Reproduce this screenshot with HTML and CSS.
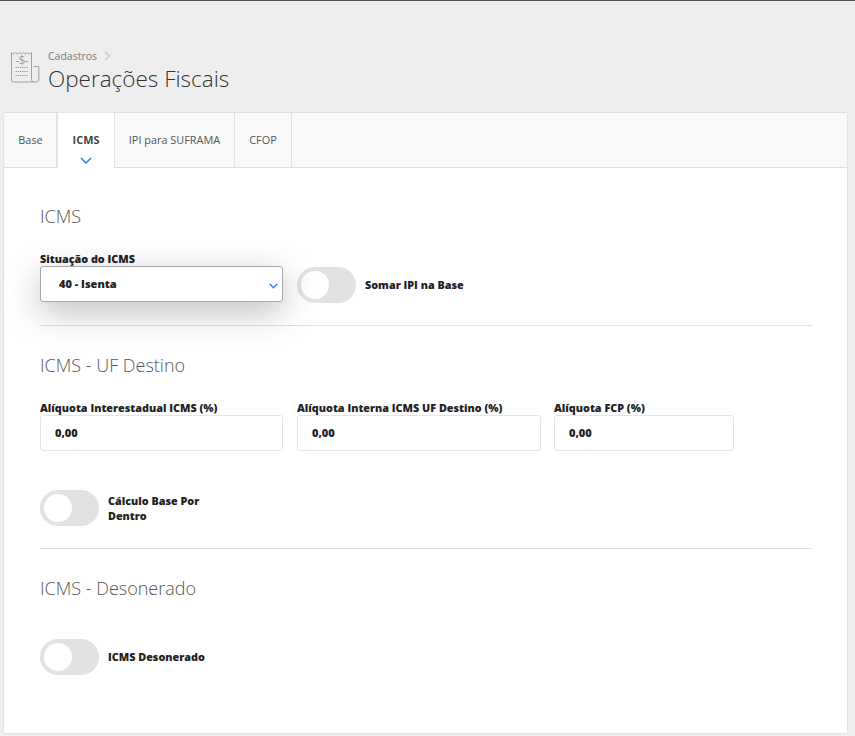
FILE: index.html
```html
<!DOCTYPE html>
<html lang="pt-BR">
<head>
<meta charset="utf-8">
<title>Operações Fiscais</title>
<link rel="stylesheet" href="styles.css">
</head>
<body>
<header class="page-header">
  <svg class="page-icon" width="30" height="33" viewBox="0 0 30 33" fill="none" stroke="#a5a0a0" stroke-width="1">
    <path d="M1.500 1.500l2 1.500 2-1.500 2 1.500 2-1.500 2 1.500 2-1.500 2 1.500 2-1.500 2 1.500 2-1.500V28.500a2.500 2.500 0 0 0 2.500 2.500"/>
    <path d="M1.500 1.500V29a2 2 0 0 0 2 2H26a2.800 2.800 0 0 0 2.800-2.800V15.500H23.500"/>
    <path d="M6 10.500h3M15 10.500h3"/>
    <path d="M5.500 16.500h13M5.500 20.500h13M5.500 24.500h13" stroke-dasharray="1.500 .7"/>
    <text class="icon-dollar" x="12" y="14">$</text>
  </svg>
  <div class="titles">
    <div class="crumb">Cadastros
      <svg class="crumb-arrow" width="7" height="10" viewBox="0 0 7 10" fill="none" stroke="#c4c4c4" stroke-width="1.2"><path d="M1 1l4.500 4L1 9"/></svg>
    </div>
    <h1>Operações Fiscais</h1>
  </div>
</header>
<main class="card">
  <nav class="tabs">
    <div class="tab tab-base">Base</div>
    <div class="tab tab-active">ICMS
      <svg class="tab-chevron" width="12" height="7" viewBox="0 0 12 7" fill="none" stroke="#2e86f0" stroke-width="1.6"><path d="M1 1l5 5 5-5"/></svg>
    </div>
    <div class="tab tab-ipi">IPI para SUFRAMA</div>
    <div class="tab tab-cfop">CFOP</div>
  </nav>
  <div class="content">
    <h2 class="first">ICMS</h2>
    <div class="row row-select">
      <div class="field field-a">
        <label class="label-select">Situação do ICMS</label>
        <div class="select">40 - Isenta
          <svg class="select-chevron" width="9" height="6" viewBox="0 0 9 6" fill="none" stroke="#2e86f0" stroke-width="1.5"><path d="M.8 1l3.700 3.700L8.200 1"/></svg>
        </div>
      </div>
      <div class="toggle-wrap toggle-inline">
        <span class="toggle"><span class="knob"></span></span>
        <span class="toggle-label">Somar IPI na Base</span>
      </div>
    </div>
    <hr class="divider">
    <h2>ICMS - UF Destino</h2>
    <div class="row row-inputs">
      <div class="field field-a">
        <label>Alíquota Interestadual ICMS (%)</label>
        <div class="input">0,00</div>
      </div>
      <div class="field field-b">
        <label>Alíquota Interna ICMS UF Destino (%)</label>
        <div class="input">0,00</div>
      </div>
      <div class="field field-c">
        <label>Alíquota FCP (%)</label>
        <div class="input">0,00</div>
      </div>
    </div>
    <div class="toggle-wrap toggle-base">
      <span class="toggle"><span class="knob"></span></span>
      <span class="toggle-label narrow">Cálculo Base Por Dentro</span>
    </div>
    <hr class="divider">
    <h2>ICMS - Desonerado</h2>
    <div class="toggle-wrap toggle-deson">
      <span class="toggle"><span class="knob"></span></span>
      <span class="toggle-label">ICMS Desonerado</span>
    </div>
  </div>
</main>
</body>
</html>
```
FILE: styles.css
```css
* { box-sizing: border-box; }
html, body { height: 100%; }
body {
  margin: 0;
  background: #eeeeee;
  border-top: 1px solid #55554f;
  font-family: "Open Sans", sans-serif;
  color: #333;
  overflow: hidden;
}
.page-header {
  height: 111px;
  display: flex;
  align-items: flex-start;
  padding: 50px 0 0 10px;
  gap: 8px;
}
.page-icon { flex: none; }
.icon-dollar {
  font-family: "Open Sans", sans-serif;
  font-size: 12px;
  fill: #a5a0a0;
  stroke: none;
  text-anchor: middle;
}
.titles { margin-top: -2px; }
.crumb {
  font-size: 10.5px;
  line-height: 14px;
  color: #7b7676;
  display: flex;
  align-items: center;
  gap: 7px;
}
h1 {
  margin: 0;
  font-size: 22.5px;
  line-height: 32px;
  font-weight: 300;
  color: #333;
}
.card {
  margin: 0 7px 0 3px;
  height: 622px;
  background: #fff;
  border: 1px solid #dfe2e6;
  border-top-color: #d9dde3;
  border-radius: 2px;
}
.tabs {
  display: flex;
  height: 55px;
  background: #f9f9f9;
  border-bottom: 1px solid #dcdcdc;
}
.tab {
  display: flex;
  align-items: center;
  justify-content: center;
  font-size: 10.9px;
  color: #555;
  border-right: 1px solid #dfe2e6;
  height: 55px;
  padding-bottom: 2px;
}
.tab-base { width: 53px; padding-left: 1px; }
.tab-ipi { width: 120px; }
.tab-cfop { width: 57px; }
.tab-active {
  width: 58px;
  position: relative;
  margin-top: -1px;
  height: 56px;
  background: #fff;
  border-left: 1px solid #dfe2e6;
  font-weight: 700;
  color: #444;
  border-top: 1px solid #e6e8eb;
  border-radius: 2px 2px 0 0;
}
.tab-chevron {
  position: absolute;
  left: 22px;
  bottom: 4px;
}
.content { padding: 0 35px 0 36px; }
h2 {
  margin: 0;
  font-size: 18px;
  line-height: 24px;
  font-weight: 300;
  color: #555;
}
h2.first { padding-top: 36px; }
.row { display: flex; gap: 14px; }
.row-select { margin-top: 23px; align-items: flex-start; }
.row-inputs { margin-top: 24px; }
.field-a { width: 243px; }
.field-b { width: 244px; margin-right: -1px; }
.field-c { width: 180px; }
label {
  display: block;
  font-size: 10.8px;
  line-height: 13px;
  margin-bottom: 1px;
  font-weight: 800;
  color: #222;
  white-space: nowrap;
}
.label-select { line-height: 15px; margin-bottom: 0; }
.select, .input {
  height: 36px;
  background: #fff;
  border-radius: 3px;
  font-size: 11px;
  font-weight: 800;
  color: #222;
  display: flex;
  align-items: center;
}
.select {
  position: relative;
  border: 1px solid #a9a9a9;
  padding: 0 0 2px 18px;
  box-shadow: 0 10px 34px rgba(0, 0, 0, .26);
}
.select-chevron { position: absolute; right: 4px; top: 16px; }
.input {
  border: 1px solid #e4e4e4;
  padding: 0 0 2px 14px;
}
.toggle-wrap { display: flex; align-items: center; gap: 9px; }
.toggle {
  flex: none;
  width: 59px;
  height: 36px;
  border-radius: 18px;
  background: #e2e2e2;
  padding: 4px;
  display: block;
}
.knob {
  display: block;
  width: 28px;
  height: 28px;
  border-radius: 50%;
  background: #fff;
}
.toggle-label {
  font-size: 10.8px;
  line-height: 15px;
  font-weight: 800;
  color: #222;
  padding-bottom: 1px;
}
.toggle-label.narrow { width: 112px; }
.toggle-inline { margin-top: 16px; }
.divider { margin: 22px 0 27px; border: 0; border-top: 1px solid #dde0e4; }
.toggle-base { margin-top: 39px; }
.toggle-deson { margin-top: 39px; }
```
